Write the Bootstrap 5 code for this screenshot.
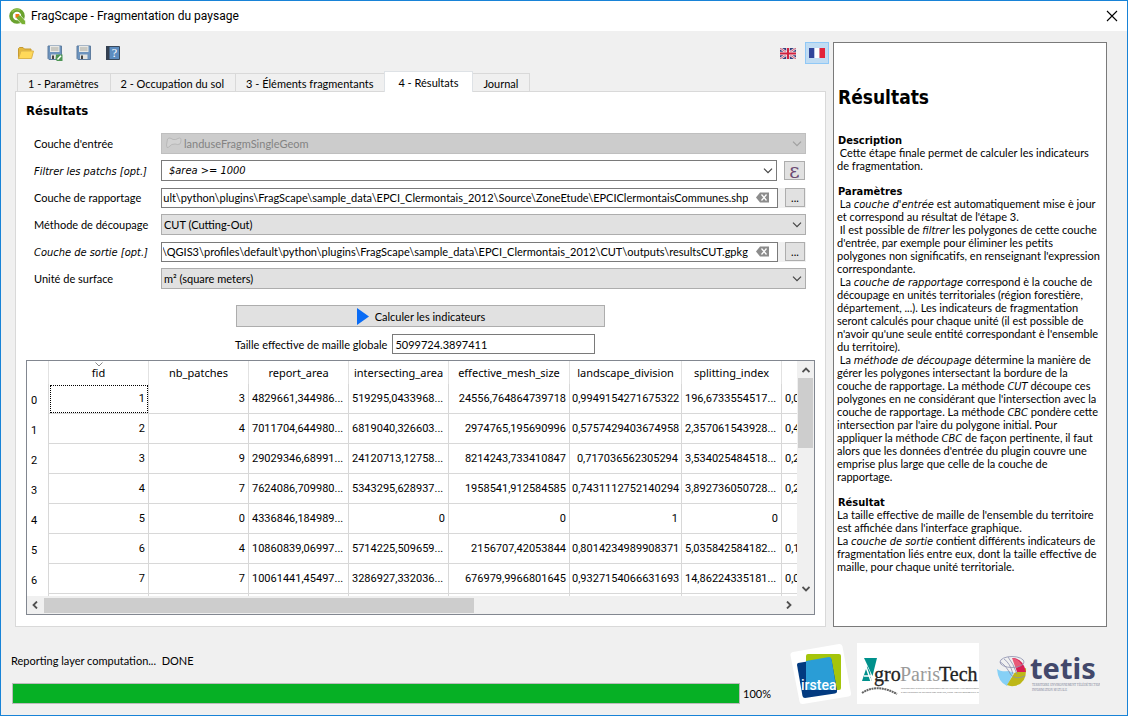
<!DOCTYPE html>
<html lang="fr">
<head>
<meta charset="utf-8">
<meta name="viewport" content="width=device-width, initial-scale=1">
<title>FragScape - Fragmentation du paysage</title>
<link href="https://cdn.jsdelivr.net/npm/bootstrap@5.3.0/dist/css/bootstrap.min.css" rel="stylesheet">
<style>
  :root { --ui: Lato, "Liberation Sans", sans-serif; --ui-bold: "DejaVu Sans Condensed", "DejaVu Sans", sans-serif; --sys: Roboto, "Noto Sans", sans-serif; }
  body { font: 11px/13px var(--ui); color: #000; background: #f0f0f0; border: 1px solid #1883d7; }
  em { font-family: var(--ui-bold); line-height: 1; }
  .title-bar { background: #fff; height: 30px; padding: 0 9px 0 8px; gap: 5px; font: 12px/16px var(--sys); }
  .plain-btn { border: 0; background: none; padding: 0; display: flex; }
  .workspace { padding: 11px 20px 0 14px; gap: 5px; min-height: 0; }
  .tool-bar { height: 22px; padding-left: 3px; gap: 13px; margin-right: -1px; }
  .lang-btn { border: 1px solid transparent; width: 24px; height: 22px; padding: 0; background: none; display: flex; align-items: center; justify-content: center; }
  .lang-btn.active { background: #c0dcf3; border-color: #90c8f6; margin-left: -8px; }

  .tab-strip { border: 0; margin: 7px 0 0 2px; align-items: flex-end; height: 21px; }
  .tab-strip .nav-link { font: inherit; color: #000; background: #f0f0f0; border: 1px solid #d9d9d9; border-bottom: 0; border-radius: 0; padding: 1px 11px 0 10px; height: 18px; margin: 0 0 0 -1px; }
  .tab-strip .nav-link.active { background: #fff; height: 21px; padding: 1px 14px 1px 13px; margin-bottom: -1px; position: relative; }
  .tab-strip .nav-item:first-child .nav-link { margin-left: 0; }
  .page-box { background: #fff; border: 1px solid #d9d9d9; margin-right: 2px; padding: 11px 10px 11px 10px; min-height: 0; }
  .page-title { font: bold 13px/16px var(--ui-bold); margin: 0 0 14px; }

  .form-rows { padding: 0 9px 0 8px; gap: 6px; }
  .form-line { display: grid; grid-template-columns: 127px 1fr; height: 21px; align-items: center; }
  .form-line > label { margin: 0; }
  .combo, .edit { font: inherit; color: #000; border-radius: 0; min-height: 0; width: 100%; }
  .combo { height: 21px; padding: 0 20px 0 2px; border: 1px solid #adadad; background: #e1e1e1 url("data:image/svg+xml,%3Csvg xmlns='http://www.w3.org/2000/svg' width='10' height='6'%3E%3Cpath d='M1 .7l4 4 4-4' fill='none' stroke='%23444' stroke-width='1.2'/%3E%3C/svg%3E") no-repeat right 3px center; background-size: 10px 6px; }
  .combo.filter { background-color: #fff; border-color: #7a7a7a; padding-left: 7px; font-style: italic; font-family: var(--ui-bold); }
  .combo:disabled { background-color: #ccc; color: #838383; border-color: #bfbfbf; opacity: 1; padding-left: 22px;
    background-image: url("data:image/svg+xml,%3Csvg xmlns='http://www.w3.org/2000/svg' width='10' height='6'%3E%3Cpath d='M1 .7l4 4 4-4' fill='none' stroke='%23a0a0a0' stroke-width='1.2'/%3E%3C/svg%3E"), url("data:image/svg+xml,%3Csvg xmlns='http://www.w3.org/2000/svg' width='16' height='12'%3E%3Cpath d='M1 10.500Q0 8 1 5Q1 1 3 1Q5 1 7 2.500Q10 3 12 1.500Q15 0 15 3Q15 5 14 7Q12 8 9 7Q5 7 4 9Q2 11 1 10.500Z' fill='%23d2d2d2' stroke='%23b8b8b8'/%3E%3C/svg%3E"); background-position: right 3px center, 4px 3px; background-size: 10px 6px, 16px 12px; }
  .edit { height: 20px; border: 1px solid #7a7a7a; padding: 0 29px 0 1px; background: #fff; }
  .edit-wrap { position: relative; flex: 1; }
  .edit-wrap .clear-btn { position: absolute; right: 9px; top: 4px; }
  .file-line { background: #f0f0f0; gap: 7px; }
  .push-btn { font: inherit; color: #000; background: #e1e1e1; border: 1px solid #adadad; border-radius: 0; padding: 0; }
  .mini-btn { width: 20px; height: 19px; margin-right: 1px; display: flex; align-items: center; justify-content: center; }
  .mini-btn.expr { width: 21px; }
  .eps { font: 20px/14px "DejaVu Serif", serif; color: #6b4a72; }
  .calc-btn { width: 369px; height: 22px; gap: 6px; margin: 16px 210px 0 210px; }
  .result-line { margin: 7px 0 6px 209px; gap: 5px; height: 20px; }
  .result-line .edit { width: 203px; padding: 0 2px; }

  .grid-frame { border: 1px solid #828790; display: grid; grid-template: minmax(0, 1fr) 16px / minmax(0, 1fr) 17px; min-height: 0; background: #f0f0f0; padding-bottom: 1px; }
  .grid-view { overflow: hidden; background: #fff; margin-bottom: 1px; }
  .data-grid { table-layout: fixed; width: 854px; border-collapse: separate; border-spacing: 0; font: 11px/14px var(--sys); margin: 0; }
  .data-grid th { font-weight: 400; }
  .data-grid thead th { height: 23px; padding: 1px 0 0; text-align: center; border-right: 1px solid #e2e2e2; font-family: "Noto Sans", sans-serif; position: relative; }
  .data-grid tbody th { padding: 4px 0 0 4px; border-right: 1px solid #d8d8d8; }
  .data-grid tbody tr { height: 30px; }
  .data-grid td { padding: 1px 3px 0 2px; text-align: right; white-space: nowrap; border-right: 1px solid #d8d8d8; border-bottom: 1px solid #d8d8d8; }
  .data-grid td.cut { text-align: left; padding-left: 3px; padding-right: 0; }
  .data-grid td.focus-cell { outline: 1px dotted #000; outline-offset: -2px; }
  .sort-mark { position: absolute; left: 46px; top: 1px; }
  .scroll-y { display: flex; flex-direction: column; align-items: center; justify-content: space-between; padding: 6px 1px 5px; }
  .scroll-y i { flex: 1; width: 15px; margin-top: 5px; }
  .scroll-y i::before { content: ""; display: block; height: 70px; background: #cdcdcd; }
  .scroll-x { display: flex; align-items: center; padding: 0 5px 0 5px; }
  .scroll-x i { flex: 1; height: 15px; margin-left: 6px; }
  .scroll-x i::before { content: ""; display: block; height: 15px; width: 58%; background: #cdcdcd; }

  .help-pane { width: 274px; background: #fff; border: 1px solid #7a7a7a; padding: 42px 0 0 3px; white-space: nowrap; overflow: hidden; }
  .help-pane h1 { font: bold 19px/24px var(--ui-bold); margin: 0 0 25px 1px; }
  .help-pane h2 { font: bold 11px/13px var(--ui-bold); margin: 13px 0 0 1px; }
  .help-pane p { margin: -1px 0 0; }
  .status-zone { padding: 16px 27px 11px 10px; height: 88px; }
  .status-text { margin-right: 19px; padding-top: 11px; }
  .progress-line { gap: 3px; margin: 16px 0 0 1px; }
  .progress { --bs-progress-height: 21px; --bs-progress-border-radius: 0; --bs-progress-bar-bg: #06b025; --bs-progress-bg: #e6e6e6; border: 1px solid #bcbcbc; flex: 1; }
</style>
</head>
<body class="d-flex flex-column vh-100 overflow-hidden">

<header class="title-bar d-flex align-items-center flex-shrink-0">
  <svg width="17" height="17" viewBox="0 0 17 17" aria-hidden="true">
    <circle cx="8" cy="8" r="6" fill="none" stroke="#6aa22f" stroke-width="3.600"/>
    <path d="M3 4a6 6 0 0 1 8-1.500" fill="none" stroke="#8fc04a" stroke-width="2"/>
    <path d="M7 7h4l5.500 6v3.500H13L7 10z" fill="#7ab135" stroke="#fff" stroke-width=".6"/>
    <path d="M6.500 6h4L9.500 8.500 6.500 10z" fill="#ee7913"/>
  </svg>
  <span class="flex-grow-1">FragScape - Fragmentation du paysage</span>
  <button class="plain-btn" aria-label="Fermer"><svg width="12" height="12" viewBox="0 0 12 12"><path d="M1 1l10 10M11 1L1 11" stroke="#000" stroke-width="1.100"/></svg></button>
</header>

<main class="workspace d-flex flex-grow-1">
  <section class="d-flex flex-column flex-grow-1" style="min-width:0">
    <div class="tool-bar d-flex align-items-center">
      <button class="plain-btn" aria-label="Ouvrir"><svg width="16" height="16" viewBox="0 0 16 16"><path d="M.500 13.500V3.500L1.500 2.500H5l1.500 1.500h6.500v2" fill="#e5b93c" stroke="#c59a33"/><path d="M.500 13.500L3 6h12.500L13.500 13.500z" fill="#ffd95a" stroke="#dcb54c"/></svg></button>
      <button class="plain-btn" aria-label="Enregistrer sous"><svg width="16" height="16" viewBox="0 0 16 16"><path d="M1 1h13.500v13.500H2L1 13.500z" fill="#6d94be" stroke="#5f7d9f"/><path d="M3 1h9.500v6H3z" fill="#e9e9e5"/><path d="M4 3h7.500M4 5h7.500" stroke="#a9a9a0"/><path d="M4 9.500h7.500V14H4z" fill="#e4e4e0"/><path d="M5 10.500h2V14H5z" fill="#444"/><path d="M9 9.500h6.500V16H10l-1.500-1.500z" fill="#4e9656"/><path d="M10.500 14.500l3.500-3.800" stroke="#fff" stroke-width="1.500"/></svg></button>
      <button class="plain-btn" aria-label="Enregistrer"><svg width="16" height="16" viewBox="0 0 16 16"><path d="M1 1h13.500v13.500H2L1 13.500z" fill="#6d94be" stroke="#5f7d9f"/><path d="M3 1h9.500v6H3z" fill="#e9e9e5"/><path d="M4 3h7.500M4 5h7.500" stroke="#a9a9a0"/><path d="M4 9.500h7.500V14H4z" fill="#e4e4e0"/><path d="M5 10.500h2V14H5z" fill="#444"/></svg></button>
      <button class="plain-btn" aria-label="Aide"><svg width="16" height="16" viewBox="0 0 16 16"><path d="M1.500 1.500h13v13h-13z" fill="#5c8cc0" stroke="#39495c"/><path d="M1 1h3.500v14H1z" fill="#333f50"/><text x="9.500" y="12" font-family="Liberation Serif" font-size="12" fill="#fff" text-anchor="middle">?</text></svg></button>
      <button class="lang-btn ms-auto" aria-label="English"><svg width="16" height="11" viewBox="0 0 16 11"><path fill="#34407c" d="M0 0h16v11H0z"/><path d="M0 0l16 11M16 0L0 11" stroke="#e8dce4" stroke-width="2.400"/><path d="M0 0l16 11M16 0L0 11" stroke="#d0405a" stroke-width=".8"/><path d="M8 0v11M0 5.500h16" stroke="#f2e6ea" stroke-width="3.600"/><path d="M8 0v11M0 5.500h16" stroke="#d0213f" stroke-width="2"/></svg></button>
      <button class="lang-btn active" aria-label="Français"><svg width="16" height="10" viewBox="0 0 16 10"><path fill="#31459a" d="M0 0h5.500v10H0z"/><path fill="#fff" d="M5.500 0h5v10h-5z"/><path fill="#e2243b" d="M10.500 0H16v10h-5.500z"/></svg></button>
    </div>

    <ul class="nav nav-tabs tab-strip" role="tablist">
      <li class="nav-item"><button class="nav-link">1 - Paramètres</button></li>
      <li class="nav-item"><button class="nav-link">2 - Occupation du sol</button></li>
      <li class="nav-item"><button class="nav-link">3 - Éléments fragmentants</button></li>
      <li class="nav-item"><button class="nav-link active">4 - Résultats</button></li>
      <li class="nav-item"><button class="nav-link">Journal</button></li>
    </ul>

    <div class="page-box d-flex flex-column flex-grow-1">
      <h2 class="page-title">Résultats</h2>
      <form class="form-rows d-flex flex-column">
        <div class="form-line">
          <label for="f-in">Couche d'entrée</label>
          <select id="f-in" class="form-select combo" disabled><option>landuseFragmSingleGeom</option></select>
        </div>
        <div class="form-line">
          <label for="f-filter"><em>Filtrer les patchs [opt.]</em></label>
          <div class="d-flex align-items-center" style="gap:7px">
            <input id="f-filter" class="form-control combo filter" value="$area &gt;= 1000">
            <button type="button" class="push-btn mini-btn expr flex-shrink-0" aria-label="Expression"><span class="eps">ε</span></button>
          </div>
        </div>
        <div class="form-line">
          <label for="f-rep">Couche de rapportage</label>
          <div class="file-line d-flex align-items-center">
            <div class="edit-wrap"><input id="f-rep" class="form-control edit tail" value="fault\python\plugins\FragScape\sample_data\EPCI_Clermontais_2012\Source\ZoneEtude\EPCIClermontaisCommunes.shp"><button type="button" class="plain-btn clear-btn" aria-label="Effacer"><svg width="13" height="11" viewBox="0 0 13 11"><path d="M0 5.500L4 .5h9v10H4z" fill="#8c8c8c"/><path d="M5.500 2.500l5 6M10.500 2.500l-5 6" stroke="#fff" stroke-width="1.300"/></svg></button></div>
            <button type="button" class="push-btn mini-btn">...</button>
          </div>
        </div>
        <div class="form-line">
          <label for="f-met">Méthode de découpage</label>
          <select id="f-met" class="form-select combo"><option>CUT (Cutting-Out)</option></select>
        </div>
        <div class="form-line">
          <label for="f-out"><em>Couche de sortie [opt.]</em></label>
          <div class="file-line d-flex align-items-center">
            <div class="edit-wrap"><input id="f-out" class="form-control edit tail" value="QGIS\QGIS3\profiles\default\python\plugins\FragScape\sample_data\EPCI_Clermontais_2012\CUT\outputs\resultsCUT.gpkg"><button type="button" class="plain-btn clear-btn" aria-label="Effacer"><svg width="13" height="11" viewBox="0 0 13 11"><path d="M0 5.500L4 .5h9v10H4z" fill="#8c8c8c"/><path d="M5.500 2.500l5 6M10.500 2.500l-5 6" stroke="#fff" stroke-width="1.300"/></svg></button></div>
            <button type="button" class="push-btn mini-btn">...</button>
          </div>
        </div>
        <div class="form-line">
          <label for="f-unit">Unité de surface</label>
          <select id="f-unit" class="form-select combo"><option>m² (square meters)</option></select>
        </div>
      </form>

      <button type="button" class="push-btn calc-btn d-flex align-items-center justify-content-center flex-shrink-0">
        <svg width="13" height="17" viewBox="0 0 13 17"><path d="M1 0l12 8.500L1 17z" fill="#0a6cf5"/></svg>Calculer les indicateurs
      </button>
      <div class="result-line d-flex align-items-center flex-shrink-0">
        <label for="f-res">Taille effective de maille globale</label>
        <input id="f-res" class="form-control edit" value="5099724.3897411">
      </div>

      <div class="grid-frame flex-grow-1">
        <div class="grid-view">
          <table class="data-grid">
            <colgroup><col style="width:22px"><col style="width:100px"><col style="width:100px"><col style="width:100px"><col style="width:100px"><col style="width:121px"><col style="width:112px"><col style="width:100px"><col></colgroup>
            <thead><tr><th></th><th>fid<svg class="sort-mark" width="8" height="5" viewBox="0 0 8 5"><path d="M.500 .5L4 4 7.500 .5" fill="none" stroke="#888"/></svg></th><th>nb_patches</th><th>report_area</th><th>intersecting_area</th><th>effective_mesh_size</th><th>landscape_division</th><th>splitting_index</th><th></th></tr></thead>
            <tbody>
              <tr><th>0</th><td class="focus-cell">1</td><td>3</td><td class="cut">4829661,344986...</td><td class="cut">519295,0433968...</td><td>24556,764864739718</td><td>0,9949154271675322</td><td class="cut">196,6733554517...</td><td class="cut">0,0</td></tr>
              <tr><th>1</th><td>2</td><td>4</td><td class="cut">7011704,644980...</td><td class="cut">6819040,326603...</td><td>2974765,195690996</td><td>0,5757429403674958</td><td class="cut">2,357061543928...</td><td class="cut">0,4</td></tr>
              <tr><th>2</th><td>3</td><td>9</td><td class="cut">29029346,68991...</td><td class="cut">24120713,12758...</td><td>8214243,733410847</td><td>0,717036562305294</td><td class="cut">3,534025484518...</td><td class="cut">0,2</td></tr>
              <tr><th>3</th><td>4</td><td>7</td><td class="cut">7624086,709980...</td><td class="cut">5343295,628937...</td><td>1958541,912584585</td><td>0,7431112752140294</td><td class="cut">3,892736050728...</td><td class="cut">0,2</td></tr>
              <tr><th>4</th><td>5</td><td>0</td><td class="cut">4336846,184989...</td><td>0</td><td>0</td><td>1</td><td>0</td><td></td></tr>
              <tr><th>5</th><td>6</td><td>4</td><td class="cut">10860839,06997...</td><td class="cut">5714225,509659...</td><td>2156707,42053844</td><td>0,8014234989908371</td><td class="cut">5,035842584182...</td><td class="cut">0,1</td></tr>
              <tr><th>6</th><td>7</td><td>7</td><td class="cut">10061441,45497...</td><td class="cut">3286927,332036...</td><td>676979,9966801645</td><td>0,9327154066631693</td><td class="cut">14,86224335181...</td><td class="cut">0,0</td></tr>
              <tr><th></th><td></td><td></td><td></td><td></td><td></td><td></td><td></td><td></td></tr>
            </tbody>
          </table>
        </div>
        <div class="scroll-y">
          <svg width="8" height="6" viewBox="0 0 8 6"><path d="M.500 5L4 1.500 7.500 5" fill="none" stroke="#505050" stroke-width="1.800"/></svg><i></i>
          <svg width="8" height="6" viewBox="0 0 8 6"><path d="M.500 1L4 4.500 7.500 1" fill="none" stroke="#505050" stroke-width="1.800"/></svg>
        </div>
        <div class="scroll-x">
          <svg width="6" height="8" viewBox="0 0 6 8"><path d="M5 .5L1.500 4 5 7.500" fill="none" stroke="#505050" stroke-width="1.800"/></svg><i></i>
          <svg width="6" height="8" viewBox="0 0 6 8"><path d="M1 .5L4.500 4 1 7.500" fill="none" stroke="#505050" stroke-width="1.800"/></svg>
        </div>
      </div>
    </div>
  </section>

  <aside class="help-pane flex-shrink-0">
    <h1>Résultats</h1>
    <h2>Description</h2>
    <p>&nbsp;Cette étape finale permet de calculer les indicateurs<br>de fragmentation.</p>
    <h2>Paramètres</h2>
    <p>&nbsp;La <em>couche d'entrée</em> est automatiquement mise è jour<br>et correspond au résultat de l'étape 3.<br>
    &nbsp;Il est possible de <em>filtrer</em> les polygones de cette couche<br>d'entrée, par exemple pour éliminer les petits<br>polygones non significatifs, en renseignant l'expression<br>correspondante.<br>
    &nbsp;La <em>couche de rapportage</em> correspond è la couche de<br>découpage en unités territoriales (région forestière,<br>département, ...). Les indicateurs de fragmentation<br>seront calculés pour chaque unité (il est possible de<br>n'avoir qu'une seule entité correspondant è l'ensemble<br>du territoire).<br>
    &nbsp;La <em>méthode de découpage</em> détermine la manière de<br>gérer les polygones intersectant la bordure de la<br>couche de rapportage. La méthode <em>CUT</em> découpe ces<br>polygones en ne considérant que l'intersection avec la<br>couche de rapportage. La méthode <em>CBC</em> pondère cette<br>intersection par l'aire du polygone initial. Pour<br>appliquer la méthode <em>CBC</em> de façon pertinente, il faut<br>alors que les données d'entrée du plugin couvre une<br>emprise plus large que celle de la couche de<br>rapportage.</p>
    <h2>Résultat</h2>
    <p>La taille effective de maille de l'ensemble du territoire<br>est affichée dans l'interface graphique.<br>La <em>couche de sortie</em> contient différents indicateurs de<br>fragmentation liés entre eux, dont la taille effective de<br>maille, pour chaque unité territoriale.</p>
  </aside>
</main>

<footer class="status-zone d-flex flex-shrink-0">
  <div class="status-text flex-grow-1 d-flex flex-column">
    <div>Reporting layer computation...&nbsp; DONE</div>
    <div class="progress-line d-flex align-items-center">
      <div class="progress" role="progressbar" aria-label="Progression" aria-valuenow="100" aria-valuemin="0" aria-valuemax="100"><div class="progress-bar" style="width:100%"></div></div>
      <span>100%</span>
    </div>
  </div>
  <svg class="flex-shrink-0" width="62" height="62" viewBox="0 0 62 62" role="img" aria-label="irstea">
    <path d="M3 9L49 1q3-.5 3.500 2.500L61 50q.5 3-2.500 3.500L13 61q-3 .5-3.500-2.500L.5 12.500Q0 9.500 3 9z" fill="#fff"/>
    <rect x="16" y="11" width="35" height="36" rx="2" fill="#a5c50b"/>
    <path d="M8 20l31-5q2 0 2.500 2L47 47q.5 3-2 3.500L15 55q-2 0-2.500-2L7 22q0-1.500 1-2z" fill="#023a80"/>
    <path d="M16 18l23-4q2 0 2.500 2L46 43q0 4-3 4H18q-2 0-2-2z" fill="#2a9dd6"/>
    <text x="11" y="47" font-family="Roboto" font-weight="500" font-size="14" fill="#fff">irstea</text>
  </svg>
  <svg class="flex-shrink-0" style="margin-left:5px" width="122" height="61" viewBox="0 0 122 61" role="img" aria-label="AgroParisTech">
    <path fill="#fff" d="M0 0h122v61H0z"/>
    <path d="M7 15h13L15.500 33z" fill="#00918c"/><path d="M5 38L10 23 13 29 14.500 38z" fill="#00918c"/>
    <path d="M8 21l6 17M7 33h7" stroke="#fff" stroke-width="1.500" fill="none"/>
    <g font-size="20"><text x="17" y="38" font-family="Liberation Serif" fill="#222" stroke="#222" stroke-width=".3">gro</text><text x="43" y="38" font-family="Liberation Serif" fill="#9a9a9a">Paris</text><text x="82" y="38" font-family="Liberation Sans Narrow" fill="#222" stroke="#222" stroke-width=".3">Tech</text></g>
    <path d="M5 50Q20 40 40 51" fill="none" stroke="#666" stroke-width="2" stroke-dasharray="2 .6"/>
    <g font-family="Liberation Sans Narrow" font-size="2" font-weight="700" fill="#666"><text x="44" y="46">INSTITUT DES SCIENCES ET INDUSTRIES DU VIVANT ET DE L'ENVIRONNEMENT</text><text x="44" y="50">PARIS INSTITUTE OF TECHNOLOGY FOR LIFE, FOOD AND ENVIRONMENTAL SCIENCES</text></g>
  </svg>
  <svg class="flex-shrink-0" style="margin-left:17px" width="104" height="61" viewBox="0 0 104 61" role="img" aria-label="tetis">
    <path d="M1 26Q6 30 19 27L11 43Q2 39 1 26z" fill="#86d0f6"/>
    <path d="M19 29l11-4q1 16-12 18-4 .5-7-1z" fill="#bdb717"/>
    <path d="M16 15q11 0 14 14H20z" fill="#d81e52"/><path d="M16 15q7 1 10 7l-7 4z" fill="#e85a78"/>
    <path d="M5 20Q10 14 16 15L21 29Q14 32 5 20z" fill="#f0f0f0"/>
    <g fill="none" stroke="#8b8fae" stroke-width=".8"><ellipse cx="16" cy="19" rx="12" ry="5.500"/><path d="M4 19q5 2 11 13 5 5 14 1M8 16q6 4 9 15M12 14q5 6 9 17"/></g>
    <text x="34" y="36" font-family="Noto Sans" font-weight="700" font-size="29" fill="#42486b">tetis</text>
    <g font-family="Liberation Sans Narrow" font-size="3" fill="#777b93"><text x="36" y="43">TERRITOIRE ENVIRONNEMENT TÉLÉDÉTECTION</text><text x="36" y="48">INFORMATION SPATIALE</text></g>
  </svg>
</footer>

<script src="https://cdn.jsdelivr.net/npm/bootstrap@5.3.0/dist/js/bootstrap.bundle.min.js"></script>
<script>
  // Long paths show their end, where the file name is.
  document.querySelectorAll('.tail').forEach(el => { el.scrollLeft = el.scrollWidth; });
</script>
</body>
</html>
